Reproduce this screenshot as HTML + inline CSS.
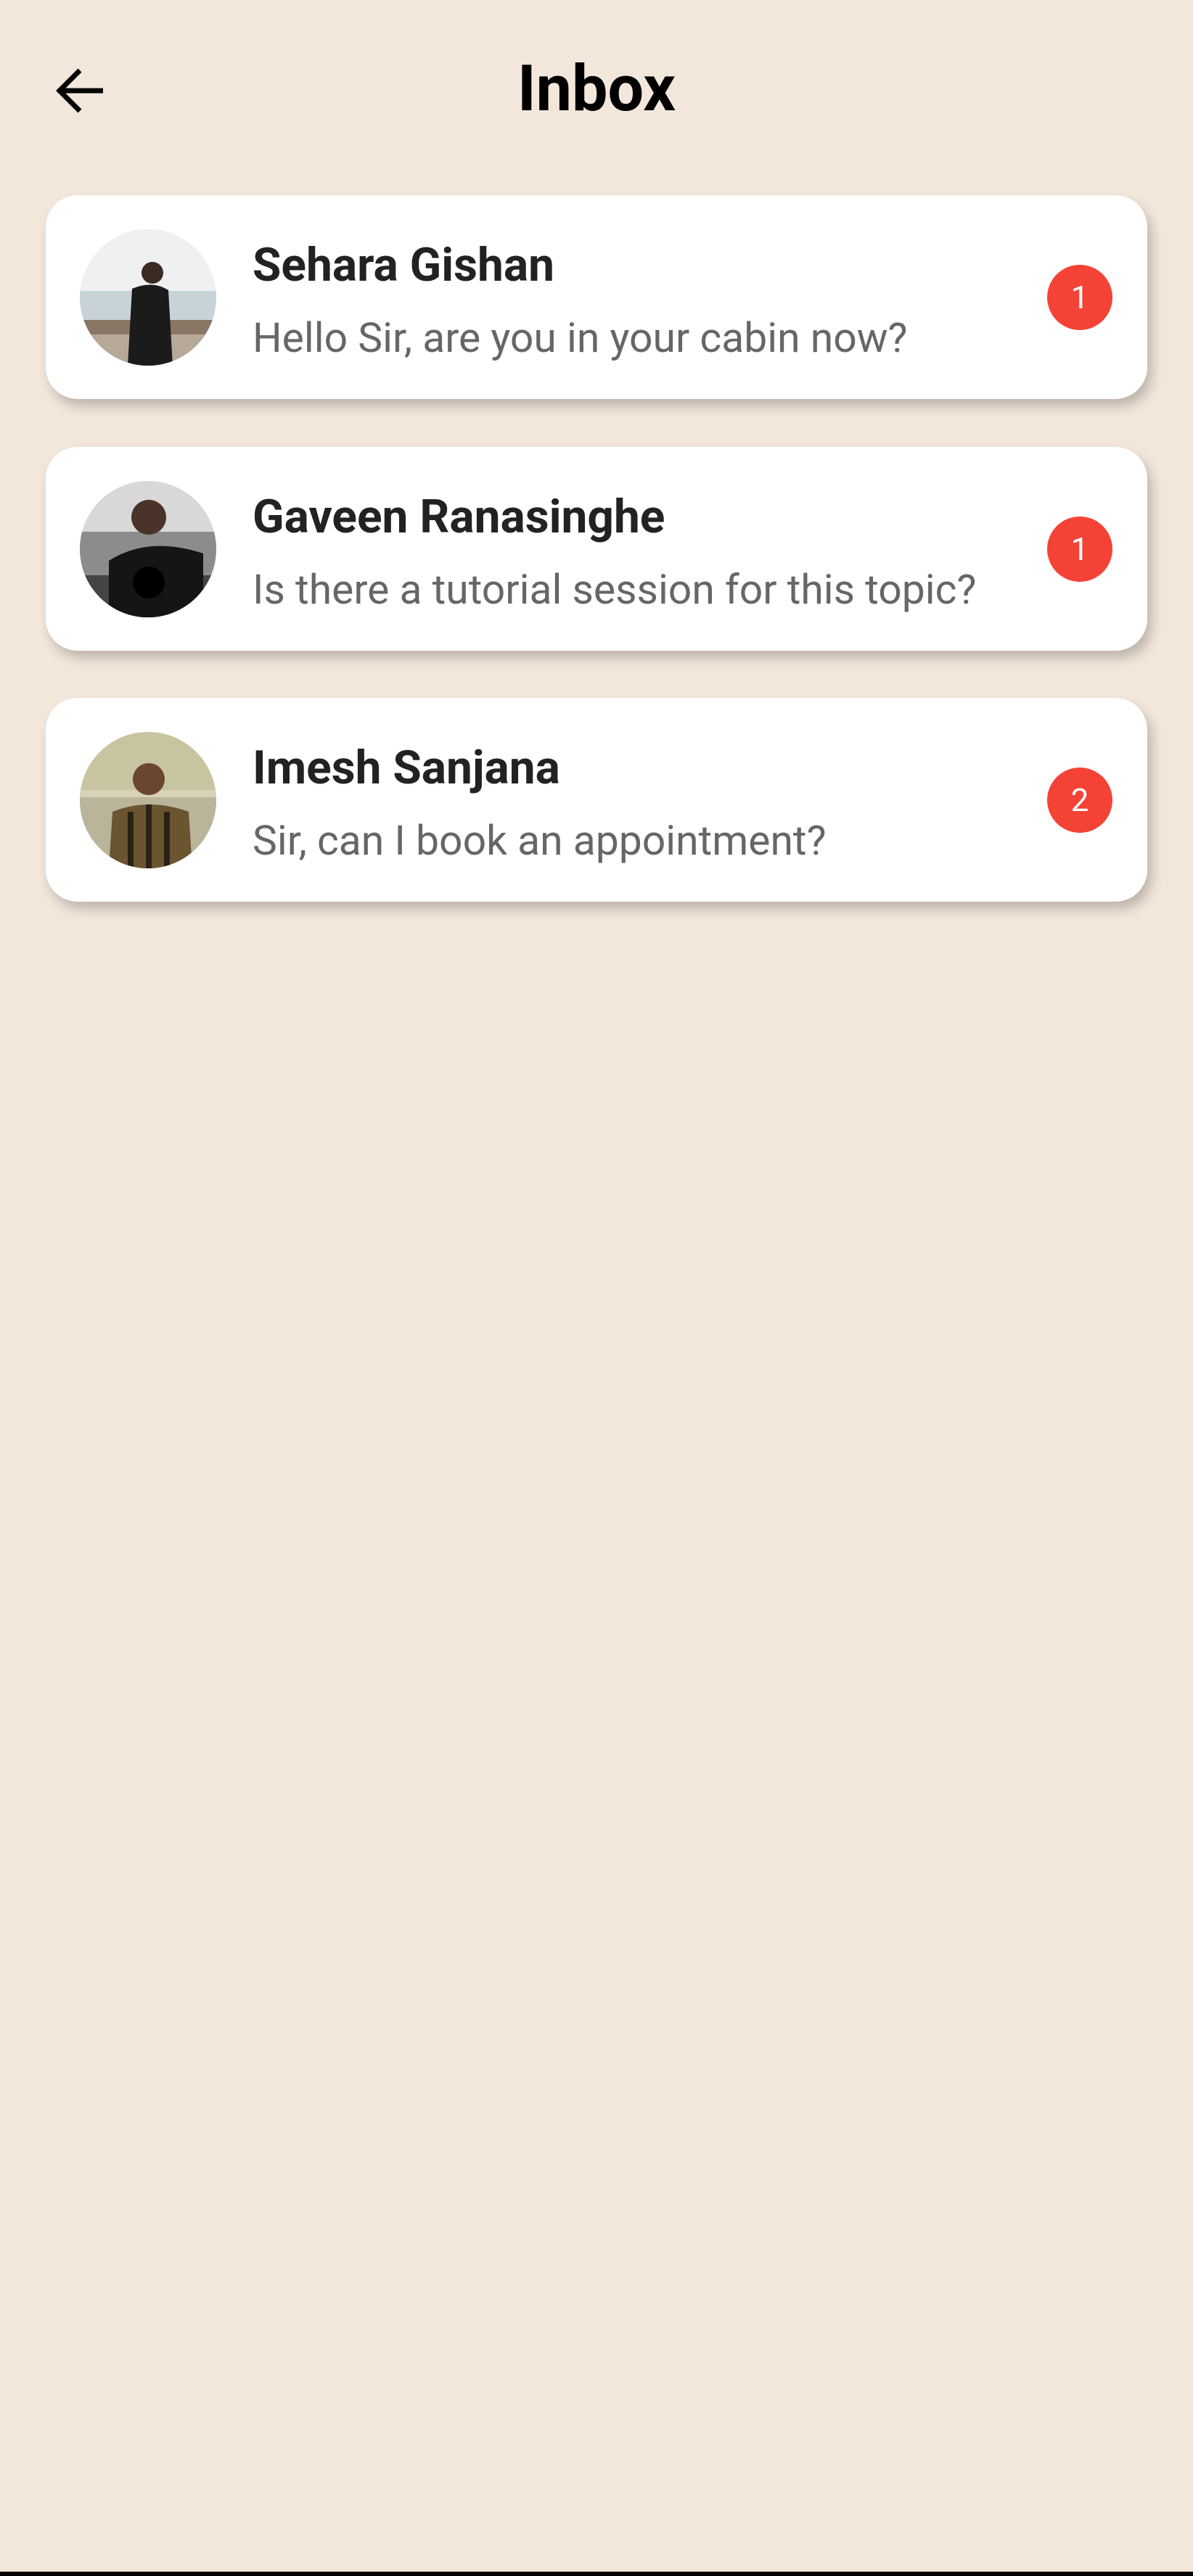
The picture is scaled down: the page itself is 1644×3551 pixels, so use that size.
<!DOCTYPE html>
<html><head><meta charset="utf-8"><style>
html,body{margin:0;padding:0}
body{width:1644px;height:3551px;background:#f3e7db;position:relative;overflow:hidden;font-family:"Roboto","Liberation Sans",sans-serif}
.title{position:absolute;left:0;width:1644px;top:68px;text-align:center;font-size:88px;font-weight:bold;color:#000;line-height:110px}
.back{position:absolute;left:76px;top:92px}
.card{position:absolute;left:63px;width:1518px;height:281px;background:#fff;border-radius:44px;box-shadow:6px 10px 16px rgba(0,0,0,0.22)}
.av{position:absolute;left:47px;top:47px;width:188px;height:188px;border-radius:50%;overflow:hidden}
.name{position:absolute;left:285px;top:59px;font-size:64px;font-weight:bold;color:#222;line-height:76px;white-space:nowrap}
.msg{position:absolute;left:285px;top:162px;font-size:57px;color:#666;line-height:70px;white-space:nowrap}
.badge{position:absolute;left:1380px;top:96px;width:90px;height:90px;border-radius:50%;background:#f44336;color:#fff;font-size:44px;text-align:center;line-height:90px}
.bar{position:absolute;left:0;top:3545px;width:1644px;height:6px;background:#000}
</style></head><body>
<svg class="back" width="70" height="66" viewBox="0 0 70 66"><path d="M66 33H8M34 5L6 33l28 28" fill="none" stroke="#000" stroke-width="7"/></svg>
<div class="title">Inbox</div>

<div class="card" style="top:269px">
 <div class="av"><svg width="188" height="188" viewBox="0 0 188 188">
  <rect width="188" height="188" fill="#eef0f2"/>
  <rect y="85" width="188" height="45" fill="#c8d3d8"/>
  <rect y="125" width="188" height="63" fill="#8a7664"/>
  <rect y="145" width="188" height="43" fill="#b7a99a"/>
  <circle cx="100" cy="60" r="15" fill="#3a2a22"/>
  <path d="M72 82Q100 70 122 84L128 188H66Z" fill="#1b1b1b"/>
 </svg></div>
 <div class="name">Sehara Gishan</div>
 <div class="msg">Hello Sir, are you in your cabin now?</div>
 <div class="badge">1</div>
</div>

<div class="card" style="top:616px">
 <div class="av"><svg width="188" height="188" viewBox="0 0 188 188">
  <rect width="188" height="188" fill="#d8d8d8"/>
  <rect y="70" width="188" height="118" fill="#8c8c8c"/>
  <rect y="130" width="188" height="58" fill="#444"/>
  <circle cx="95" cy="50" r="24" fill="#4a3328"/>
  <path d="M40 110Q95 75 170 100L170 188H40Z" fill="#151515"/>
  <circle cx="95" cy="140" r="22" fill="#000"/>
 </svg></div>
 <div class="name">Gaveen Ranasinghe</div>
 <div class="msg">Is there a tutorial session for this topic?</div>
 <div class="badge">1</div>
</div>

<div class="card" style="top:962px">
 <div class="av"><svg width="188" height="188" viewBox="0 0 188 188">
  <rect width="188" height="188" fill="#d9d2b8"/>
  <rect y="0" width="188" height="80" fill="#c9c4a0"/>
  <rect y="90" width="188" height="98" fill="#b9b49a"/>
  <circle cx="95" cy="65" r="22" fill="#6a4530"/>
  <path d="M45 110Q95 90 150 110L155 188H40Z" fill="#6b5430"/>
  <path d="M70 110v78M95 100v88M120 110v78" stroke="#2a2216" stroke-width="8"/>
 </svg></div>
 <div class="name">Imesh Sanjana</div>
 <div class="msg">Sir, can I book an appointment?</div>
 <div class="badge">2</div>
</div>

<div class="bar"></div>
</body></html>
